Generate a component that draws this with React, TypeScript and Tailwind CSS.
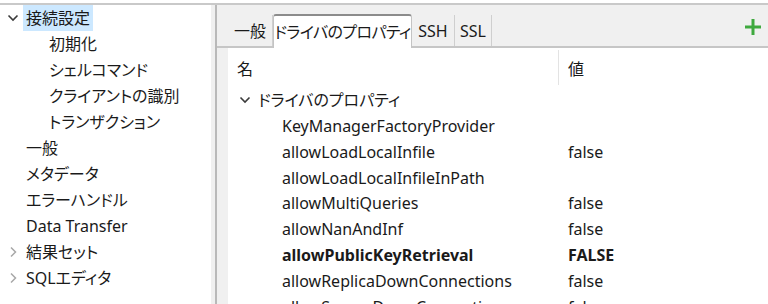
import React from "react";

type NavItem = { label: string; level: 0 | 1; chevron?: "down" | "right"; selected?: boolean };

const nav: NavItem[] = [
  { label: "接続設定", level: 0, chevron: "down", selected: true },
  { label: "初期化", level: 1 },
  { label: "シェルコマンド", level: 1 },
  { label: "クライアントの識別", level: 1 },
  { label: "トランザクション", level: 1 },
  { label: "一般", level: 0 },
  { label: "メタデータ", level: 0 },
  { label: "エラーハンドル", level: 0 },
  { label: "Data Transfer", level: 0 },
  { label: "結果セット", level: 0, chevron: "right" },
  { label: "SQLエディタ", level: 0, chevron: "right" },
];

type Prop = { name: string; value?: string; bold?: boolean };

const props: Prop[] = [
  { name: "KeyManagerFactoryProvider" },
  { name: "allowLoadLocalInfile", value: "false" },
  { name: "allowLoadLocalInfileInPath" },
  { name: "allowMultiQueries", value: "false" },
  { name: "allowNanAndInf", value: "false" },
  { name: "allowPublicKeyRetrieval", value: "FALSE", bold: true },
  { name: "allowReplicaDownConnections", value: "false" },
  { name: "allowSourceDownConnections", value: "false" },
];

function ChevronDown() {
  return (
    <svg width="14" height="14" viewBox="0 0 14 14" fill="none">
      <path d="M2.5 4.5 7 9l4.5-4.5" stroke="#3a3a3a" strokeWidth="1.6" />
    </svg>
  );
}

function ChevronRight() {
  return (
    <svg width="14" height="14" viewBox="0 0 14 14" fill="none">
      <path d="M5 2.5 9.5 7 5 11.5" stroke="#a8a8a8" strokeWidth="1.5" />
    </svg>
  );
}

function NavRow({ item }: { item: NavItem }) {
  return (
    <div className="h-[26px] flex items-center">
      <div className="w-[23px] flex justify-center pl-[2px]">
        {item.chevron === "down" && <ChevronDown />}
        {item.chevron === "right" && <ChevronRight />}
      </div>
      <div
        className={`h-[26px] flex items-center whitespace-nowrap px-[3px] ${item.level === 1 ? "ml-[23px]" : "ml-0"} ${
          item.selected ? "bg-[#cce8ff]" : ""
        }`}
      >
        {item.label}
      </div>
    </div>
  );
}

function Tab({ label, width, active }: { label: string; width: string; active?: boolean }) {
  if (active) {
    return (
      <div
        className={`${width} h-[34px] -mb-[2px] flex items-center justify-center whitespace-nowrap tracking-[-0.6px] bg-white border-x border-[#c4c4c4] border-t-2 border-t-[#8c8c8c] rounded-t-[3px] relative z-10`}
      >
        {label}
      </div>
    );
  }
  return (
    <div className={`${width} h-[31px] flex items-center justify-center whitespace-nowrap border-r border-[#cfcfcf]`}>
      {label}
    </div>
  );
}

export default function App() {
  return (
    <div
      className="w-[768px] h-[304px] overflow-hidden bg-white pt-[3px] text-[16px] text-[#1a1a1a] [font-feature-settings:'palt']"
      style={{ fontFamily: "'Noto Sans', 'Noto Sans CJK JP', sans-serif" }}
    >
      <div className="h-full flex border-t-2 border-[#c9c9c9]">
        {/* left tree */}
        <div className="w-[211px] shrink-0 bg-white leading-none">
          {nav.map((n) => (
            <NavRow key={n.label} item={n} />
          ))}
        </div>

        {/* sash */}
        <div className="w-[4px] shrink-0 bg-[#f0f0f0]" />
        <div className="w-[2px] shrink-0 bg-[#b9b9b9]" />

        {/* right panel */}
        <div className="flex-1 flex flex-col bg-[#f0f0f0] min-w-0">
          <div className="h-[43px] shrink-0 flex items-end pl-[11px] border-b-2 border-[#c6c6c6] leading-none">
            <Tab label="一般" width="w-[45px]" />
            <Tab label="ドライバのプロパティ" width="w-[139px]" active />
            <Tab label="SSH" width="w-[43px]" />
            <Tab label="SSL" width="w-[37px]" />
            <div className="flex-1" />
            <div className="self-center mt-[2px] mr-[6px]">
              <svg width="18" height="18" viewBox="0 0 18 18">
                <path d="M9 1v16M1 9h16" stroke="#3fa93f" strokeWidth="3" />
              </svg>
            </div>
          </div>

          <div className="flex-1 pl-[11px] min-h-0">
            <div className="h-full bg-white leading-none">
              {/* header */}
              <div className="h-[39px] flex">
                <div className="w-[330px] pl-[9px] pt-[2px] flex items-center">名</div>
                <div className="w-px h-[35px] mt-[2px] bg-[#e3e3e3]" />
                <div className="pl-[9px] pt-[2px] flex items-center">値</div>
              </div>

              <div className="h-[26px] flex items-center pl-[10px]">
                <ChevronDown />
                <span className="ml-[6px]">ドライバのプロパティ</span>
              </div>

              {props.map((p) => (
                <div key={p.name} className={`h-[25.85px] flex items-center ${p.bold ? "font-bold" : ""}`}>
                  <div className="w-[331px] pl-[54px] whitespace-nowrap">{p.name}</div>
                  <div className="pl-[9px]">{p.value ?? ""}</div>
                </div>
              ))}
            </div>
          </div>
        </div>
      </div>
    </div>
  );
}
